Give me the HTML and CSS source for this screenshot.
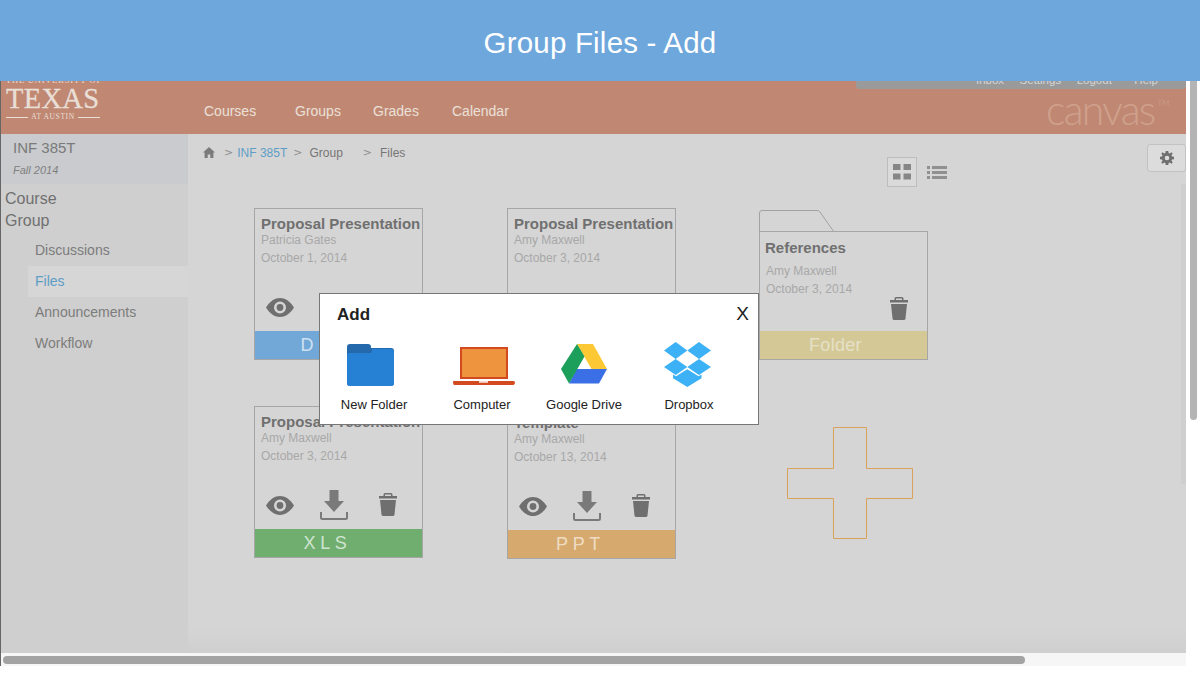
FILE: index.html
```html
<!DOCTYPE html>
<html lang="en">
<head>
    <meta charset="UTF-8">
    <title>Group Files - Add</title>
    <link rel="stylesheet" href="styles.css">
</head>
<body>
<svg class="sprites" width="0" height="0">
    <symbol id="eye" viewBox="0 0 28 19">
        <path fill-rule="evenodd" d="M0 9.500C4 3 9 0 14 0s10 3 14 9.500C24 16 19 19 14 19S4 16 0 9.500zM14 3.500a6 6 0 1 0 0 12 6 6 0 0 0 0-12z"/>
        <circle cx="14" cy="9.500" r="3.400"/>
    </symbol>
    <symbol id="download" viewBox="0 0 28 30">
        <path d="M9.500 0h9v11H24L14 22 4 11h5.500z"/>
        <path d="M1 22v5.500q0 1.500 1.500 1.500h23q1.500 0 1.500-1.500V22" fill="none" stroke="currentColor" stroke-width="2"/>
    </symbol>
    <symbol id="trash" viewBox="0 0 18 23">
        <path d="M6 0h6q1.500 0 1.500 1.500V3H18v2.500H0V3h4.500V1.500Q4.500 0 6 0zm0 1.500V3h6V1.500z" fill-rule="evenodd"/>
        <path d="M1 7h16l-1.500 14.500q-.2 1.500-1.700 1.500H4.200q-1.500 0-1.700-1.500z"/>
    </symbol>
</svg>

<header class="banner">Group Files - Add</header>

<div class="window">
    <div class="frame">
        <div class="topnav">
            <div class="logo">
                <div class="logo-top">THE UNIVERSITY OF</div>
                <div class="logo-name">TEXAS</div>
                <div class="logo-sub"><i></i>AT AUSTIN<i></i></div>
            </div>
            <nav class="menu">
                <a>Courses</a>
                <a>Groups</a>
                <a>Grades</a>
                <a>Calendar</a>
            </nav>
            <div class="topnav-right">
                <div class="userbar">
                    <span>Inbox</span><span>Settings</span><span>Logout</span><span class="help">Help</span>
                </div>
                <div class="canvas-logo">canvas<sup>TM</sup></div>
            </div>
        </div>

        <div class="body-row">
            <aside class="sidebar">
                <div class="course">
                    <div class="course-code">INF 385T</div>
                    <div class="course-term">Fall 2014</div>
                </div>
                <div class="side-head">Course</div>
                <div class="side-head">Group</div>
                <ul class="side-links">
                    <li>Discussions</li>
                    <li class="active">Files</li>
                    <li>Announcements</li>
                    <li>Workflow</li>
                </ul>
            </aside>

            <main class="content">
                <div class="toolbar">
                    <div class="crumbs">
                        <svg class="home" viewBox="0 0 12 11" width="12" height="11"><path d="M6 0l6 5.500h-1.600V11H7.300V7.400H4.700V11H1.600V5.500H0z"/></svg>
                        <span class="sep sep-first">&gt;</span>
                        <a>INF 385T</a>
                        <span class="sep">&gt;</span>
                        <span class="crumb-group">Group</span>
                        <span class="sep sep-wide">&gt;</span>
                        <span>Files</span>
                    </div>
                    <div class="view-toggle">
                        <div class="view-btn on">
                            <svg viewBox="0 0 18 16" width="18" height="16"><path d="M0 0h7.500v6H0zM10.500 0H18v6h-7.500zM0 9.500h7.500v6H0zM10.500 9.500H18v6h-7.500z"/></svg>
                        </div>
                        <div class="view-btn list">
                            <svg viewBox="0 0 20 15" width="20" height="15"><path d="M0 1h3v3H0zM5 1h15v3H5zM0 6h3v3H0zM5 6h15v3H5zM0 11h3v3H0zM5 11h15v3H5z"/></svg>
                        </div>
                    </div>
                    <div class="gear-btn">
                        <svg viewBox="0 0 14 14" width="14" height="14"><path fill-rule="evenodd" d="M5.700 0h2.600l.3 2 1.200.5L11.500 1.300l1.200 1.200-1.200 1.700.5 1.200 2 .3v2.600l-2 .3-.5 1.200 1.200 1.700-1.200 1.200-1.700-1.200-1.200.5-.3 2H5.700l-.3-2-1.200-.5-1.700 1.200-1.200-1.200 1.200-1.700-.5-1.200-2-.3V5.700l2-.3.5-1.200-1.200-1.700 1.200-1.200 1.700 1.200 1.200-.5zM7 4.700a2.300 2.300 0 1 0 0 4.600 2.300 2.300 0 0 0 0-4.600z"/></svg>
                    </div>
                </div>

                <div class="files">
                    <div class="card">
                        <h3>Proposal Presentation</h3>
                        <p class="who">Patricia Gates</p>
                        <p class="when">October 1, 2014</p>
                        <div class="actions">
                            <svg class="ic-eye"><use href="#eye"/></svg>
                        </div>
                        <div class="bar bar-doc">DOC</div>
                    </div>

                    <div class="card">
                        <h3>Proposal Presentation</h3>
                        <p class="who">Amy Maxwell</p>
                        <p class="when">October 3, 2014</p>
                        <div class="actions">
                            <svg class="ic-eye"><use href="#eye"/></svg>
                        </div>
                        <div class="bar bar-doc">DOC</div>
                    </div>

                    <div class="folder">
                        <svg class="folder-tab" viewBox="0 0 76 22" width="76" height="22"><path d="M.5 22V3Q.5.500 3 .500h55q2 0 3 1.500L75 22" fill="none" stroke="#a2a2a2"/></svg>
                        <div class="card card-folder">
                            <h3>References</h3>
                            <p class="who">Amy Maxwell</p>
                            <p class="when">October 3, 2014</p>
                            <div class="actions actions-folder">
                                <svg class="ic-trash"><use href="#trash"/></svg>
                            </div>
                            <div class="bar bar-folder">Folder</div>
                        </div>
                    </div>

                    <div class="card">
                        <h3>Proposal Presentation</h3>
                        <p class="who">Amy Maxwell</p>
                        <p class="when">October 3, 2014</p>
                        <div class="actions">
                            <svg class="ic-eye"><use href="#eye"/></svg>
                            <svg class="ic-down"><use href="#download"/></svg>
                            <svg class="ic-trash"><use href="#trash"/></svg>
                        </div>
                        <div class="bar bar-xls">XLS</div>
                    </div>

                    <div class="card card-low">
                        <h3>Template</h3>
                        <p class="who">Amy Maxwell</p>
                        <p class="when">October 13, 2014</p>
                        <div class="actions">
                            <svg class="ic-eye"><use href="#eye"/></svg>
                            <svg class="ic-down"><use href="#download"/></svg>
                            <svg class="ic-trash"><use href="#trash"/></svg>
                        </div>
                        <div class="bar bar-ppt">PPT</div>
                    </div>

                    <svg class="plus" viewBox="0 0 126 112" width="126" height="112">
                        <path d="M46.500.500h33v41h46v30h-46v40h-33v-40H.500v-30h46z" fill="none" stroke="#d8a25a"/>
                    </svg>
                </div>
                <div class="content-scroll"></div>
            </main>
        </div>

        <div class="hscroll"><div class="hscroll-thumb"></div></div>
    </div>
    <div class="gutter"><div class="gutter-thumb"></div></div>
</div>

<div class="modal">
    <div class="modal-head">
        <strong>Add</strong>
        <span class="close">X</span>
    </div>
    <div class="sources">
        <div class="source">
            <svg viewBox="0 0 47 42" width="47" height="42">
                <path d="M3 0h18q3 0 3 3v3H0V3q0-3 3-3z" fill="#2469ab"/>
                <path d="M0 6h24V4h20q3 0 3 3v32q0 3-3 3H3q-3 0-3-3z" fill="#2469ab"/>
                <path d="M0 11q0-2 2-2h21q2 0 2-2V5h19q3 0 3 3v31q0 3-3 3H3q-3 0-3-3z" fill="#2680d3"/>
            </svg>
            <span>New Folder</span>
        </div>
        <div class="source">
            <svg viewBox="0 0 62 38" width="62" height="38">
                <rect x="8" y="1" width="46" height="30" fill="#ee943e" stroke="#d34a1e" stroke-width="2"/>
                <path d="M1.500 34h59q1.500 0 1.500 1.500T60.500 38h-59Q0 38 0 35.500T1.500 34z" fill="#d34a1e"/>
                <rect x="26" y="34" width="9" height="1.800" fill="#f6ddd2"/>
            </svg>
            <span>Computer</span>
        </div>
        <div class="source">
            <svg viewBox="0 0 46 40" width="46" height="40">
                <path d="M15.500 25H46l-8 14.500H8z" fill="#3a6fe6"/>
                <path d="M16 0h16l14 25H30.500z" fill="#fcc934"/>
                <path d="M16 0l7.500 12.500L8 39.500 0 25z" fill="#1c9f5b"/>
            </svg>
            <span>Google Drive</span>
        </div>
        <div class="source">
            <svg viewBox="0 0 47 45" width="47" height="45">
                <g fill="#3db1f5">
                    <path d="M0 8.500L11.700 0l11.600 8.500L11.700 17z"/>
                    <path d="M23.300 8.500L35 0l12 8.500L35 17z"/>
                    <path d="M0 25l11.700-8 11.600 8-11.600 8z"/>
                    <path d="M23.300 25L35 17l12 8-12 8z"/>
                    <path d="M9 32.500l3 1.700 11.300-7 11.200 7 3-1.700v3.800L23.300 45 9 36.300z"/>
                </g>
            </svg>
            <span>Dropbox</span>
        </div>
    </div>
</div>
</body>
</html>
```

FILE: styles.css
```css
* {
    margin: 0;
    padding: 0;
    box-sizing: border-box;
}

html, body {
    width: 1200px;
    height: 676px;
    overflow: hidden;
}

body {
    position: relative;
    background-color: #fff;
    font-family: "Liberation Sans", Arial, sans-serif;
    color: #6f6f6f;
}

.sprites {
    display: block;
    height: 0;
}

.banner {
    height: 81px;
    display: flex;
    align-items: center;
    justify-content: center;
    padding-top: 4px;
    background-color: #6ea7dc;
    color: #fff;
    font-size: 29.500px;
    letter-spacing: .2px;
}

.window {
    display: flex;
    height: 585px;
}

.frame {
    width: 1186px;
    display: flex;
    flex-direction: column;
    border-left: 1px solid #666;
}

/* top nav */
.topnav {
    height: 53px;
    display: flex;
    background-color: #c08873;
    overflow: hidden;
}

.logo {
    width: 187px;
    padding-left: 5px;
    color: #e9dfd6;
    font-family: "Liberation Serif", serif;
}

.logo-top {
    margin-top: -6px;
    height: 11px;
    font-size: 8.500px;
    line-height: 11px;
    letter-spacing: .8px;
    white-space: nowrap;
}

.logo-name {
    font-size: 28.500px;
    line-height: 25px;
    letter-spacing: .3px;
    -webkit-text-stroke: .3px #e9dfd6;
}

.logo-sub {
    display: flex;
    align-items: center;
    gap: 3px;
    width: 94px;
    margin-top: 1px;
    font-size: 7.500px;
    line-height: 10px;
    letter-spacing: .6px;
    white-space: nowrap;
}

.logo-sub i {
    flex: 1;
    height: 1px;
    background-color: #e9dfd6;
}

.menu {
    display: flex;
    padding-top: 22px;
    padding-left: 16px;
    font-size: 14px;
    line-height: 17px;
    color: #ebe0d8;
}

.menu a:nth-child(1) { width: 91px; }
.menu a:nth-child(2) { width: 78px; }
.menu a:nth-child(3) { width: 79px; }

.topnav-right {
    margin-left: auto;
    width: 330px;
}

.userbar {
    height: 8px;
    display: flex;
    justify-content: flex-end;
    gap: 15.500px;
    padding-right: 28px;
    overflow: hidden;
    background-color: #9a9a9a;
    border-radius: 0 0 4px 4px;
    font-size: 11.500px;
    line-height: 12px;
    color: #d6d6d6;
}

.userbar span {
    margin-top: -7px;
    flex-shrink: 0;
}

.userbar .help {
    margin-left: 7px;
}

.canvas-logo {
    margin-top: 0;
    padding-left: 190px;
    font-family: Lato, sans-serif;
    font-weight: 300;
    font-size: 41px;
    line-height: 42px;
    letter-spacing: -1.700px;
    color: #cfa18d;
    white-space: nowrap;
}

.canvas-logo sup {
    margin-left: 3px;
    font-size: 8px;
    vertical-align: 19px;
    line-height: 0;
    letter-spacing: 0;
}

.body-row {
    flex: 1;
    display: flex;
    min-height: 0;
}

/* left column */
.sidebar {
    width: 187px;
    flex-shrink: 0;
    background-color: #cfcfcf;
}

.course {
    height: 50px;
    padding: 5px 0 0 12px;
    background-color: #c9cbce;
}

.course-code {
    font-size: 15px;
    line-height: 18px;
    color: #7a7a7a;
}

.course-term {
    margin-top: 7px;
    font-size: 11px;
    line-height: 13px;
    font-style: italic;
    color: #808080;
}

.side-head {
    padding-left: 4px;
    font-size: 16px;
    line-height: 22px;
    color: #6f6f6f;
}

.course + .side-head {
    margin-top: 4px;
}

.side-links {
    list-style: none;
    margin-top: 3px;
    padding-left: 27px;
}

.side-links li {
    height: 31px;
    padding-left: 7px;
    font-size: 14px;
    line-height: 31px;
    color: #7c7c7c;
}

.side-links .active {
    background-color: #d6d6d6;
    color: #5d9dc6;
}

/* file area */
.content {
    position: relative;
    flex: 1;
    background: linear-gradient(#d5d5d5 95%, #cfcfcf);
}

.toolbar {
    height: 74px;
    display: flex;
    padding-top: 10px;
}

.crumbs {
    display: flex;
    align-items: center;
    height: 17px;
    padding-left: 15px;
    font-size: 12px;
    color: #757575;
}

.crumbs a {
    color: #5d9dc6;
}

.home {
    fill: #7b7b7b;
}

.sep {
    margin: 0 7px 0 6px;
    color: #8f8f8f;
    font-family: "DejaVu Sans", sans-serif;
    font-size: 11px;
}

.sep-first {
    margin: 0 4px 0 9px;
}

.crumb-group {
    margin-right: 14px;
}

.sep-wide {
    margin-right: 8px;
}

.view-toggle {
    display: flex;
    margin-top: 13px;
    margin-left: auto;
    margin-right: 195px;
}

.view-btn {
    width: 30px;
    height: 30px;
    display: flex;
    align-items: center;
    justify-content: center;
    fill: #868686;
}

.view-btn.list {
    margin-left: 5px;
    fill: #909090;
}

.view-btn.on {
    border: 1px solid #bdbdbd;
    background-color: #dadada;
}

.gear-btn {
    width: 39px;
    height: 28px;
    display: flex;
    align-items: center;
    justify-content: center;
    border: 1px solid #c2c2c2;
    border-radius: 3px;
    background-color: #dcdcdc;
    fill: #6f6f6f;
}

.files {
    display: grid;
    grid-template-columns: 253px 252px 169px;
    grid-template-rows: 198px 152px;
    margin-left: 66px;
}

.card {
    width: 169px;
    height: 152px;
    display: flex;
    flex-direction: column;
    padding: 7px 0 0 0;
    border: 1px solid #a6a6a6;
    overflow: hidden;
}

.card-low {
    margin-top: 1px;
}

.card h3,
.card p {
    padding-left: 6px;
    white-space: nowrap;
}

.card h3 {
    font-size: 15px;
    line-height: 16px;
    font-weight: bold;
    color: #707070;
}

.who {
    font-size: 12px;
    line-height: 16px;
    color: #a8a8a8;
}

.when {
    margin-top: 2px;
    font-size: 12px;
    line-height: 16px;
    color: #a8a8a8;
}

.actions {
    margin-top: auto;
    height: 38px;
    display: flex;
    align-items: flex-start;
    padding-left: 11px;
    fill: #6f6f6f;
    color: #6f6f6f;
}

.ic-eye {
    width: 28px;
    height: 19px;
    margin-top: 5px;
}

.ic-down {
    width: 28px;
    height: 30px;
    margin: -1px 0 0 26px;
    fill: #7a7a7a;
    color: #7a7a7a;
}

.ic-trash {
    width: 18px;
    height: 23px;
    margin: 2px 0 0 31px;
}

.bar {
    height: 28px;
    padding-right: 22px;
    text-align: center;
    font-size: 18px;
    line-height: 28px;
    letter-spacing: 4.700px;
    color: #cfe0cf;
}

.bar-doc { background-color: #72a8d8; color: #cfe0f0; }
.bar-xls { background-color: #6fae6f; color: #cfe4cf; }
.bar-ppt { background-color: #d6aa6e; color: #eeddc4; }

.folder {
    display: flex;
    flex-direction: column;
    margin-top: 2px;
}

.folder-tab {
    display: block;
    margin-bottom: -1px;
}

.card-folder {
    height: 129px;
    padding-top: 8px;
}

.card-folder h3 {
    padding-left: 5px;
}

.card-folder .who {
    margin-top: 7px;
    padding-left: 6px;
}

.actions-folder {
    height: 36px;
    justify-content: flex-end;
    padding: 0 19px 0 0;
}

.actions-folder .ic-trash {
    margin: 0;
}

.bar-folder {
    padding-right: 16px;
    background-color: #d4c996;
    color: #e6e0c8;
    letter-spacing: .3px;
}

.plus {
    margin: 21px 0 0 28px;
}

.content-scroll {
    position: absolute;
    top: 50px;
    right: 0;
    width: 5px;
    height: 300px;
    background-color: #cfcfcf;
}

/* scrollbars */
.hscroll {
    height: 13px;
    padding: 3px 0 2px 2px;
    background-color: #f6f6f6;
}

.hscroll-thumb {
    width: 1022px;
    height: 8px;
    border-radius: 4px;
    background-color: #a3a3a3;
}

.gutter {
    width: 14px;
    padding-left: 4px;
}

.gutter-thumb {
    width: 7px;
    height: 339px;
    border-radius: 0 0 4px 4px;
    background-color: #b4b4b4;
}

/* the dialog on top */
.modal {
    position: absolute;
    left: 319px;
    top: 293px;
    width: 440px;
    height: 132px;
    background-color: #fff;
    border: 1px solid #777;
    color: #222;
}

.modal-head {
    display: flex;
    justify-content: space-between;
    padding: 11px 9px 0 17px;
    font-size: 17px;
    line-height: 20px;
}

.close {
    margin-top: -1px;
    font-size: 19px;
    line-height: 19px;
}

.sources {
    display: grid;
    grid-template-columns: 108px 108px 96px 114px;
    margin-top: 19px;
}

.source {
    display: flex;
    flex-direction: column;
    align-items: center;
    height: 68px;
    font-size: 13px;
    line-height: 15px;
}

.source svg {
    display: block;
    flex-shrink: 0;
}

.source span {
    margin-top: auto;
}

.source:nth-child(1) svg {
    margin-right: 8px;
}

.source:nth-child(2) svg {
    margin: 3px 0 0 4px;
}

.source:nth-child(4) svg {
    margin: -2px 4px 0 0;
}
```
